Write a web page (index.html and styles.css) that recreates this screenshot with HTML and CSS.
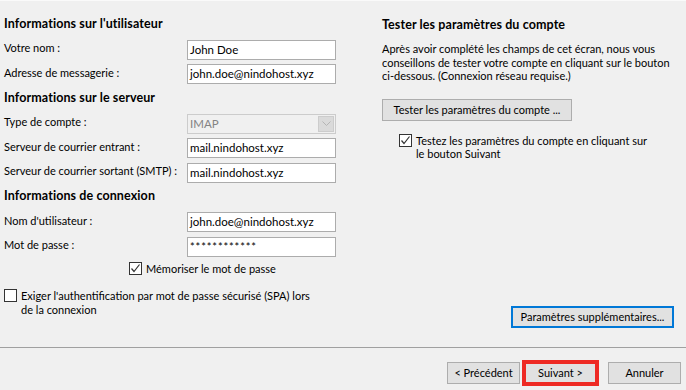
FILE: index.html
```html
<!DOCTYPE html>
<html lang="fr">
<head>
	<meta charset="utf-8">
	<title>Paramètres du compte</title>
	<link rel="stylesheet" href="styles.css">
</head>
<body>
	<div class="dialog">
		<div class="main">
			<div class="col-left">
				<div class="form">
					<div class="heading">Informations sur l'utilisateur</div>
					<label>Votre nom :</label>
					<div class="text">John Doe</div>
					<label>Adresse de messagerie :</label>
					<div class="text">john.doe@nindohost.xyz</div>

					<div class="heading">Informations sur le serveur</div>
					<label>Type de compte :</label>
					<div class="select">
						<span>IMAP</span>
						<span class="arrow">
							<svg width="9" height="5" viewBox="0 0 9 5"><path d="M0.5 0.5 L4.5 4.5 L8.5 0.5" fill="none" stroke="#b5b5b5" stroke-width="1"/></svg>
						</span>
					</div>
					<label>Serveur de courrier entrant :</label>
					<div class="text">mail.nindohost.xyz</div>
					<label>Serveur de courrier sortant (SMTP) :</label>
					<div class="text">mail.nindohost.xyz</div>

					<div class="heading">Informations de connexion</div>
					<label>Nom d'utilisateur :</label>
					<div class="text">john.doe@nindohost.xyz</div>
					<label>Mot de passe :</label>
					<div class="text pwd">************</div>
				</div>

				<div class="checkrow remember">
					<span class="check on">
						<svg width="11" height="11" viewBox="0 0 11 11"><path d="M1.5 5.5 L4 8.5 L9.5 1.5" fill="none" stroke="#333" stroke-width="1.2"/></svg>
					</span>
					<span>Mémoriser le mot de passe</span>
				</div>

				<div class="checkrow spa">
					<span class="check"></span>
					<span>Exiger l'authentification par mot de passe sécurisé (SPA) lors<br>de la connexion</span>
				</div>
			</div>

			<div class="col-right">
				<div class="heading">Tester les paramètres du compte</div>
				<p class="info">Après avoir complété les champs de cet écran, nous vous<br>conseillons de tester votre compte en cliquant sur le bouton<br>ci-dessous. (Connexion réseau requise.)</p>
				<div class="btn test">Tester les paramètres du compte ...</div>
				<div class="checkrow next">
					<span class="check on">
						<svg width="11" height="11" viewBox="0 0 11 11"><path d="M1.5 5.5 L4 8.5 L9.5 1.5" fill="none" stroke="#333" stroke-width="1.2"/></svg>
					</span>
					<span>Testez les paramètres du compte en cliquant sur<br>le bouton Suivant</span>
				</div>
				<div class="btn more">Paramètres supplémentaires...</div>
			</div>
		</div>

		<div class="footer">
			<div class="btn nav">&lt; Précédent</div>
			<div class="btn nav default">Suivant &gt;</div>
			<div class="btn nav cancel">Annuler</div>
		</div>
	</div>
</body>
</html>
```

FILE: styles.css
```css
html, body {
	margin: 0;
	background: #f0f0f0;
}
body {
	font-family: Lato, 'Liberation Sans', sans-serif;
	font-size: 11px;
	color: #000;
	white-space: nowrap;
	border-top: 1px solid #fafafa;
}
.dialog {
	width: 686px;
	height: 389px;
	display: flex;
	flex-direction: column;
}
.main {
	height: 346px;
	display: flex;
}
.col-left {
	flex: none;
	width: 378px;
	padding: 10px 0 0 4px;
	box-sizing: border-box;
}
.form {
	display: grid;
	grid-template-columns: 183px 149px;
	grid-auto-rows: 24.6px;
	align-items: center;
}
.heading {
	font-weight: bold;
	font-size: 12.5px;
	letter-spacing: 0.1px;
	grid-column: 1 / 3;
}
.text, .select {
	height: 20px;
	box-sizing: border-box;
	border: 1px solid #acacac;
	background: #fff;
	padding: 0 2px;
	font-size: 11.5px;
	line-height: 18px;
	position: relative;
	top: 2px;
}
.pwd {
	font-size: 11px;
	letter-spacing: 0.9px;
}
.select {
	background: #f0f0f0;
	border-color: #cccccc;
	color: #838383;
	display: flex;
	justify-content: space-between;
	padding-right: 1px;
}
.arrow {
	width: 16px;
	height: 16px;
	margin-top: 1px;
	background: #dadada;
	border: 1px solid #cccccc;
	box-sizing: border-box;
	display: flex;
	align-items: center;
	justify-content: center;
}
.checkrow {
	display: flex;
	align-items: flex-start;
	gap: 4px;
	line-height: 13.5px;
}
.check {
	width: 13px;
	height: 13px;
	flex: none;
	box-sizing: border-box;
	border: 1px solid #333;
	background: #fff;
	display: flex;
	align-items: center;
	justify-content: center;
}
.remember {
	margin: 5px 0 0 125px;
}
.spa {
	margin-top: 14px;
}
.col-right {
	flex: 1;
	display: flex;
	flex-direction: column;
	align-items: flex-start;
	padding: 16px 12px 19px 4px;
}
.info {
	margin: 10px 0 0;
	line-height: 13.5px;
}
.btn {
	background: #e1e1e1;
	border: 1px solid #adadad;
	box-sizing: border-box;
	height: 22px;
	line-height: 20px;
	text-align: center;
}
.test {
	margin-top: 16px;
	padding: 0 10px;
	width: 190px;
}
.next {
	margin: 13px 0 0 17px;
}
.more {
	margin-top: auto;
	align-self: flex-end;
	width: 163px;
	height: 22px;
	line-height: 18px;
	border: 2px solid #0078d7;
}
.footer {
	border-top: 1px solid #a0a0a0;
	flex: 1;
	display: flex;
	justify-content: flex-end;
	align-items: flex-start;
	padding: 14px 5px 0 0;
}
.nav {
	width: 73px;
	height: 22px;
}
.default {
	margin-left: 4px;
	border-color: #0078d7;
	outline: 4px solid #ee2a24;
	outline-offset: -2px;
}
.cancel {
	margin-left: 11px;
}
```
